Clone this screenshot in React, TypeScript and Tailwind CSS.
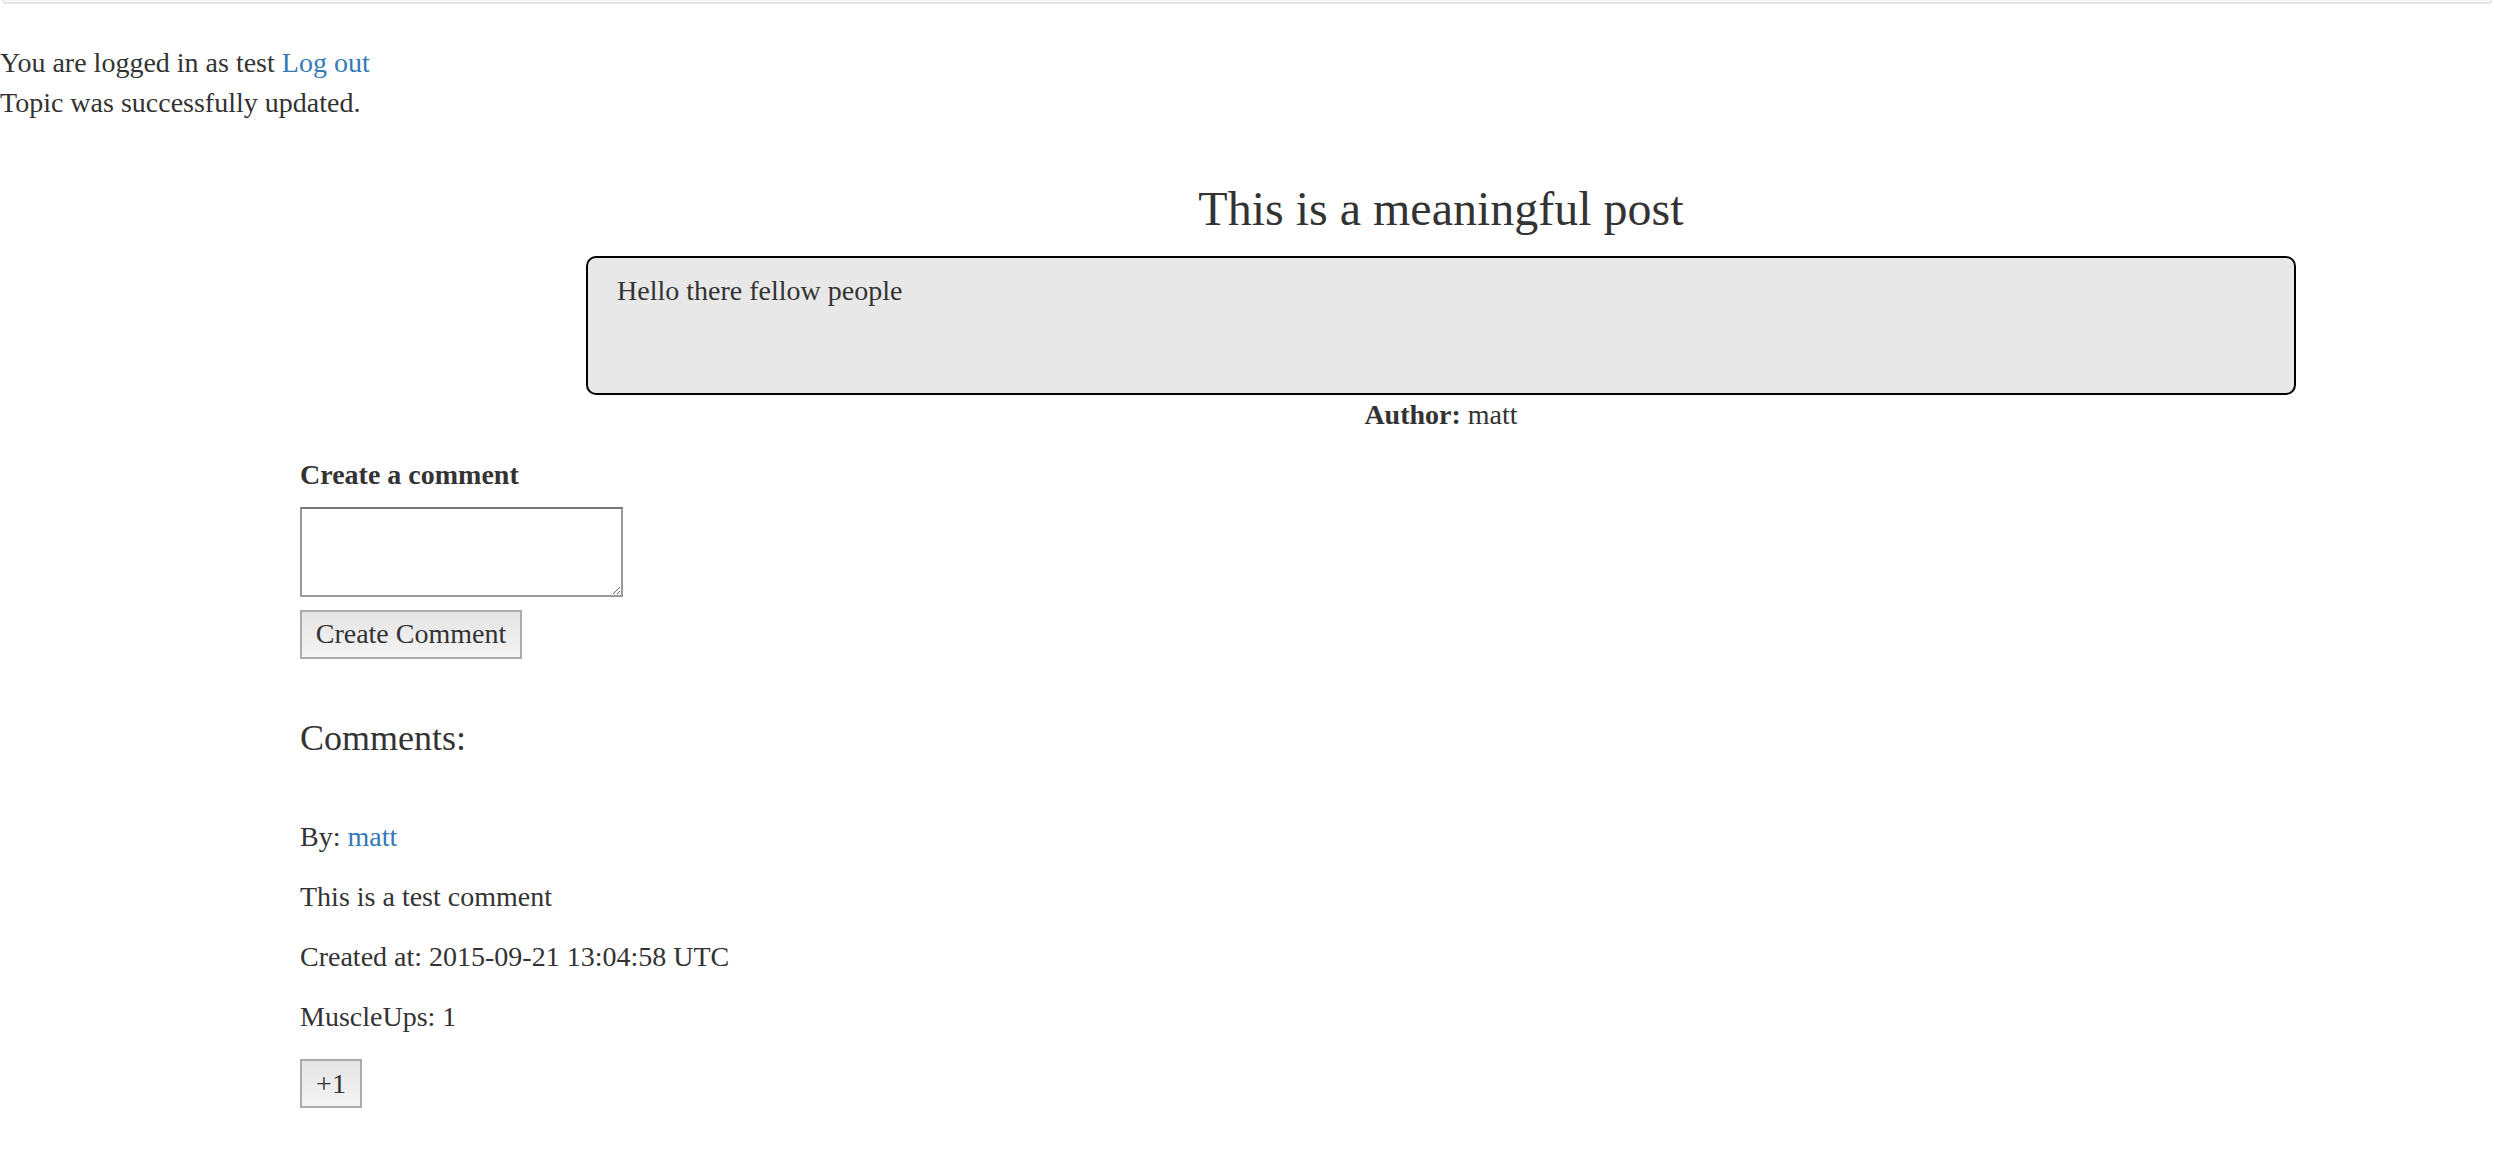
const serif = { fontFamily: '"Liberation Serif", "Times New Roman", serif' };

const Comment = () => {
  return (
    <div className="flex flex-col">
      <p className="mb-[20px]">
        By:{" "}
        <a href="#" className="text-[#337ab7]">
          matt
        </a>
      </p>
      <p className="mb-[20px]">This is a test comment</p>
      <p className="mb-[20px]">Created at: 2015-09-21 13:04:58 UTC</p>
      <p>MuscleUps: 1</p>
      <button
        type="button"
        className="mt-[22px] w-[62px] h-[49px] border-2 border-[#ababab] bg-gradient-to-b from-[#e4e4e4] to-[#f4f4f4] text-[28px] leading-[40px] text-[#333]"
      >
        +1
      </button>
    </div>
  );
};

export default function App() {
  return (
    <div
      className="w-full min-h-[1172px] bg-white text-[#333] text-[28px] leading-[40px]"
      style={serif}
    >
      <div className="mx-[2px] h-[4px] border-x-2 border-b-2 border-[#e7e7e7] bg-[#f8f8f8] rounded-b-[8px]" />

      <div className="mt-[39px]">
        <p>
          You are logged in as test{" "}
          <a href="#" className="text-[#337ab7]">
            Log out
          </a>
        </p>
        <p>Topic was successfully updated.</p>
      </div>

      <div className="ml-[586px] w-[1710px] flex flex-col">
        <h3 className="mt-[59px] mb-[21px] text-center text-[48px] leading-[53px]">
          This is a meaningful post
        </h3>
        <div className="h-[139px] border-2 border-black rounded-[10px] bg-[#e8e8e8] px-[29px] pt-[13px]">
          <p>Hello there fellow people</p>
        </div>
        <p className="text-center">
          <strong>Author:</strong> matt
        </p>
      </div>

      <div className="ml-[300px] flex flex-col items-start">
        <label className="mt-[20px] font-bold">Create a comment</label>
        <textarea className="mt-[12px] w-[323px] h-[90px] border-2 border-[#999] border-t-[#777] bg-white" />
        <button
          type="button"
          className="mt-[13px] w-[222px] h-[49px] pb-[2px] border-2 border-[#ababab] bg-gradient-to-b from-[#e4e4e4] to-[#f4f4f4] text-[28px] leading-[40px] text-[#333]"
        >
          Create Comment
        </button>

        <h4 className="mt-[59px] text-[36px] leading-[40px]">Comments:</h4>
        <div className="mt-[59px]">
          <Comment />
        </div>
      </div>
    </div>
  );
}
